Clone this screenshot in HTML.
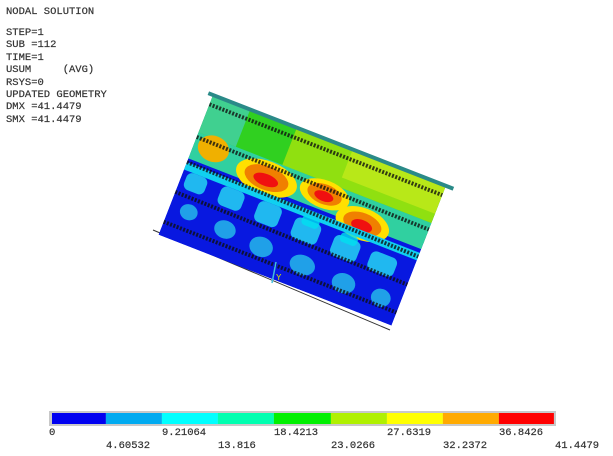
<!DOCTYPE html>
<html><head><meta charset="utf-8"><style>
html,body{margin:0;padding:0;background:#fff;width:613px;height:456px;overflow:hidden;position:relative}
.t{position:absolute;left:6px;font-family:"Liberation Mono",monospace;font-size:10.5px;color:#333;white-space:pre;line-height:12.4px;-webkit-text-stroke:0.2px #333}
.lab{position:absolute;font-family:"Liberation Mono",monospace;font-size:10.5px;color:#333;white-space:pre;-webkit-text-stroke:0.2px #333}
</style></head><body>
<div class="t" style="top:6px">NODAL SOLUTION</div>
<div class="t" style="top:27px">STEP=1
SUB =112
TIME=1
USUM     (AVG)
RSYS=0
UPDATED GEOMETRY
DMX =41.4479
SMX =41.4479</div>

<svg width="613" height="456" style="position:absolute;left:0;top:0">
<defs>
<clipPath id="c"><rect x="0" y="0" width="250" height="150"/></clipPath>
</defs>
<line x1="153" y1="230" x2="390" y2="330" stroke="#333" stroke-width="1"/>
<g transform="translate(213,95) rotate(21.3)">
<g clip-path="url(#c)">
<rect x="0" y="0" width="250" height="150" fill="#0818e0"/>
<rect x="0" y="0" width="250" height="62" fill="#30d020"/>
<rect x="90" y="0" width="160" height="40" fill="#90e010"/>
<rect x="150" y="0" width="100" height="30" fill="#b8e818"/>
<rect x="0" y="0" width="40" height="40" fill="#40d090"/>
<rect x="0" y="40" width="250" height="28" fill="#30d0a0"/>
<!-- hot spots -->
<ellipse cx="20" cy="50" rx="16" ry="13" fill="#f0b000"/>
<ellipse cx="80" cy="58" rx="32" ry="17" fill="#ffe000"/>
<ellipse cx="80" cy="58" rx="23" ry="12" fill="#f08000"/>
<ellipse cx="80" cy="60" rx="13" ry="6" fill="#f01010"/>
<ellipse cx="140" cy="52" rx="26" ry="14" fill="#ffe000"/>
<ellipse cx="140" cy="52" rx="18" ry="10" fill="#f08000"/>
<ellipse cx="140" cy="54" rx="10" ry="5" fill="#f01010"/>
<ellipse cx="186" cy="66" rx="28" ry="16" fill="#ffe000"/>
<ellipse cx="186" cy="66" rx="20" ry="11" fill="#f08000"/>
<ellipse cx="186" cy="68" rx="11" ry="6" fill="#f01010"/>
<rect x="0" y="72" width="250" height="8" fill="#10d0f0"/>
<!-- light blue cells -->
<g fill="#20b8f0">
<rect x="5" y="80" width="22" height="18" rx="6"/><rect x="42" y="80" width="25" height="20" rx="6"/>
<rect x="82" y="80" width="25" height="22" rx="6"/><rect x="122" y="82" width="28" height="22" rx="6"/>
<rect x="165" y="84" width="28" height="22" rx="6"/><rect x="205" y="86" width="28" height="20" rx="6"/>
</g>
<g fill="#00e0f0" opacity="0.8">
<rect x="128" y="78" width="18" height="10" rx="4"/><rect x="170" y="80" width="18" height="10" rx="4"/>
</g>
<g fill="#20a0e8">
<ellipse cx="20" cy="118" rx="9" ry="8"/><ellipse cx="60" cy="121" rx="11" ry="9"/>
<ellipse cx="100" cy="124" rx="12" ry="10"/><ellipse cx="145" cy="126" rx="13" ry="10"/>
<ellipse cx="190" cy="128" rx="12" ry="10"/><ellipse cx="230" cy="128" rx="10" ry="9"/>
</g>
<g stroke="#111" stroke-width="4" stroke-dasharray="2 1.5" fill="none" opacity="0.8">
<line x1="0" y1="10" x2="250" y2="10"/>
<line x1="0" y1="45" x2="250" y2="47"/>
<line x1="0" y1="72" x2="250" y2="76"/>
<line x1="0" y1="104" x2="250" y2="106"/>
<line x1="0" y1="136" x2="250" y2="136"/>
</g>
</g>
<line x1="-5" y1="0" x2="258" y2="0" stroke="#2a8a88" stroke-width="4"/>
</g>
<line x1="276" y1="262" x2="272" y2="283" stroke="#40c0e0" stroke-width="1.5"/>
<text x="276" y="280" font-family="Liberation Mono,monospace" font-size="9" fill="#d8e000">Y</text>
<!-- colour bar -->
<rect x="49" y="411" width="507" height="15" fill="#c8c8c8"/>
<g>
<rect x="52" y="413" width="53.9" height="11" fill="#0000f0"/>
<rect x="105.9" y="413" width="56" height="11" fill="#00aaf0"/>
<rect x="161.9" y="413" width="56" height="11" fill="#00ffff"/>
<rect x="217.9" y="413" width="56" height="11" fill="#00ffb0"/>
<rect x="273.9" y="413" width="57" height="11" fill="#00f000"/>
<rect x="330.9" y="413" width="56" height="11" fill="#b0f000"/>
<rect x="386.9" y="413" width="56" height="11" fill="#ffff00"/>
<rect x="442.9" y="413" width="56" height="11" fill="#ffaa00"/>
<rect x="498.9" y="413" width="55" height="11" fill="#ff0000"/>
</g>
</svg>
<div class="lab" style="left:49px;top:427px">0</div>
<div class="lab" style="left:162px;top:427px">9.21064</div>
<div class="lab" style="left:274px;top:427px">18.4213</div>
<div class="lab" style="left:387px;top:427px">27.6319</div>
<div class="lab" style="left:499px;top:427px">36.8426</div>
<div class="lab" style="left:106px;top:440px">4.60532</div>
<div class="lab" style="left:218px;top:440px">13.816</div>
<div class="lab" style="left:331px;top:440px">23.0266</div>
<div class="lab" style="left:443px;top:440px">32.2372</div>
<div class="lab" style="left:555px;top:440px">41.4479</div>
</body></html>
